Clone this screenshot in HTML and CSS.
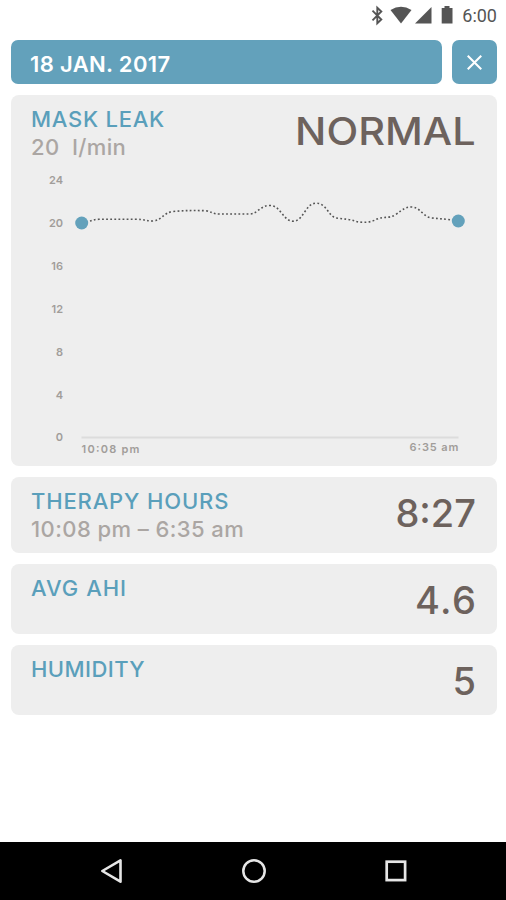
FILE: index.html
```
<!DOCTYPE html>
<html lang="en">
<head>
    <meta charset="UTF-8">
    <meta name="viewport" content="width=device-width, initial-scale=1.0">
    <title>Mask Leak</title>
    <link rel="stylesheet" href="styles.css">
</head>
<body>

<div class="screen">
    <div class="statusBar">
      <svg width="93" height="26" viewBox="0 0 93 26">
        <path d="M3.500 10.700L12.300 19.500L8.300 23.300V7.700L12.300 11.500L3.500 20.300" fill="none" stroke="#555" stroke-width="1.900"/>
        <path d="M21.500 10Q32 3.500 42.500 10L32 23.500Z" fill="#555"/>
        <path d="M62.500 7V23.500H46Z" fill="#555"/>
        <path d="M75.500 6H80.500V8H83.500V23.500H72.700V8H75.500Z" fill="#555"/>
      </svg>
      <span class="clock">6:00</span>
    </div>

    <main class="content">
      <div class="header">
        <div class="date"><span>18 JAN. 2017</span></div>
        <button class="close" aria-label="Close">
          <svg width="15" height="15" viewBox="0 0 14 14">
            <path d="M0.700 0.700L13.300 13.300M13.300 0.700L0.700 13.300" stroke="#fff" stroke-width="1.900"/>
          </svg>
        </button>
      </div>

      <section class="card cardLeak">
        <div class="cardTop">
          <div>
            <div class="title titleLeak">MASK LEAK</div>
            <div class="sub">20  l/min</div>
          </div>
          <div class="value valueNormal">NORMAL</div>
        </div>
        <svg class="chart" width="485" height="300" viewBox="11 166 485 300">
          <g class="axis" text-anchor="end">
            <text x="63" y="184">24</text>
            <text x="63" y="226.500">20</text>
            <text x="63" y="269.500">16</text>
            <text x="63" y="312.500">12</text>
            <text x="63" y="355.500">8</text>
            <text x="63" y="398.500">4</text>
            <text x="63" y="441">0</text>
          </g>
          <path class="baseline" d="M81.500 437.500H458.500"/>
          <path class="leak" d="M82 223C90 222 92 219.300 99 219.300H136C145 219.300 146 221 152 221C162 221 163 212.500 173 211.500C185 210.300 195 210.500 206 210.700C211 211.500 213 214 219 214H250C258 213.500 260 205.500 270 205.500C281 205.500 283 221.200 293 221.200C304 221.200 305 203.200 316 203.200C327 203.200 328 216 336 218C343 219 350 219 356 221.500C363 223 371 222.500 376 219.500C383 216 389 219 396 214.500C403 209 406 207 411 207C420 207 423 216 430 217.700C440 219 449 219 457 221"/>
          <circle cx="81.700" cy="223" r="6.500"/>
          <circle cx="458.300" cy="221" r="6.500"/>
          <g class="axis">
            <text x="81.500" y="453" textLength="58">10:08 pm</text>
            <text x="409.500" y="451" textLength="49">6:35 am</text>
          </g>
        </svg>
      </section>

      <section class="card cardHours">
        <div class="cardTop">
          <div>
            <div class="title titleHours">THERAPY HOURS</div>
            <div class="sub">10:08 pm – 6:35 am</div>
          </div>
          <div class="value">8:27</div>
        </div>
      </section>

      <section class="card cardSmall">
        <div class="cardTop">
          <div class="title titleAhi">AVG AHI</div>
          <div class="value valueAhi">4.6</div>
        </div>
      </section>

      <section class="card cardSmall">
        <div class="cardTop">
          <div class="title">HUMIDITY</div>
          <div class="value">5</div>
        </div>
      </section>
    </main>

    <nav class="navBar">
      <svg width="24" height="26" viewBox="0 0 24 26">
        <path d="M2.300 13L20.500 2.300V23.700Z" fill="none" stroke="#e6e6e6" stroke-width="2.600" stroke-linejoin="round"/>
      </svg>
      <svg width="26" height="26" viewBox="0 0 26 26">
        <circle cx="13" cy="13" r="10.700" fill="none" stroke="#e6e6e6" stroke-width="2.500"/>
      </svg>
      <svg width="24" height="26" viewBox="0 0 24 26">
        <rect x="2.700" y="3.700" width="18.400" height="18.400" fill="none" stroke="#e6e6e6" stroke-width="2.700"/>
      </svg>
    </nav>
  </div>
</body>
</html>
```
FILE: styles.css
```
* {
  box-sizing: border-box;
}

body {
  margin: 0;
  background: #fff;
  font-family: 'Inter', sans-serif;
}

.screen {
  width: 506px;
  height: 900px;
  display: flex;
  flex-direction: column;
  overflow: hidden;
}

.statusBar {
  height: 40px;
  padding-right: 9px;
  display: flex;
  justify-content: flex-end;
  align-items: flex-start;
}

.clock {
  font-family: 'Roboto', sans-serif;
  font-size: 18px;
  line-height: 32px;
  color: #555;
}

.content {
  flex: 1;
  padding: 0 9px 0 11px;
  display: flex;
  flex-direction: column;
  gap: 11px;
}

.header {
  height: 44px;
  display: flex;
  gap: 10px;
}

.date {
  flex: 1;
  display: flex;
  align-items: center;
  padding: 4px 0 0 19px;
  border-radius: 7px;
  background: #63a1bb;
  color: #fff;
  font-size: 22px;
  font-weight: 600;
  letter-spacing: 0.35px;
}

.close {
  width: 45px;
  padding: 0;
  display: flex;
  justify-content: center;
  align-items: center;
  border: none;
  border-radius: 7px;
  background: #63a1bb;
}

.card {
  border-radius: 8px;
  background: #eee;
}

.cardLeak {
  height: 371px;
}

.cardHours {
  height: 76px;
}

.cardSmall {
  height: 70px;
}

.cardTop {
  display: flex;
  justify-content: space-between;
  padding: 10px 21px 0 20px;
}

.title,
.sub {
  font-size: 22px;
  line-height: 28px;
  font-weight: 500;
  letter-spacing: 0.42px;
  white-space: pre;
}

.title {
  color: #5a9fbb;
}

.titleLeak {
  letter-spacing: 0.75px;
}

.titleHours {
  letter-spacing: 0.85px;
}

.titleAhi {
  letter-spacing: 1px;
}

.sub {
  color: #aba6a3;
}

.value {
  padding-top: 4px;
  font-size: 38px;
  line-height: 44px;
  font-weight: 500;
  color: #6d625d;
}

.valueNormal {
  transform: scaleX(1.09);
  transform-origin: right;
}

.valueAhi {
  letter-spacing: 1.5px;
  margin-right: -1.5px;
}

.chart {
  display: block;
  margin-top: 5px;
}

.axis {
  font-size: 11px;
  font-weight: 600;
  fill: #a19d9a;
}

.baseline {
  stroke: #dcdcdc;
  stroke-width: 2;
}

.leak {
  fill: none;
  stroke: #555;
  stroke-width: 1.6;
  stroke-dasharray: 1.8 2.3;
}

.chart circle {
  fill: #63a1bb;
}

.navBar {
  height: 58px;
  display: flex;
  justify-content: space-between;
  align-items: center;
  padding: 0 98px 0 100px;
  background: #000;
}
```
